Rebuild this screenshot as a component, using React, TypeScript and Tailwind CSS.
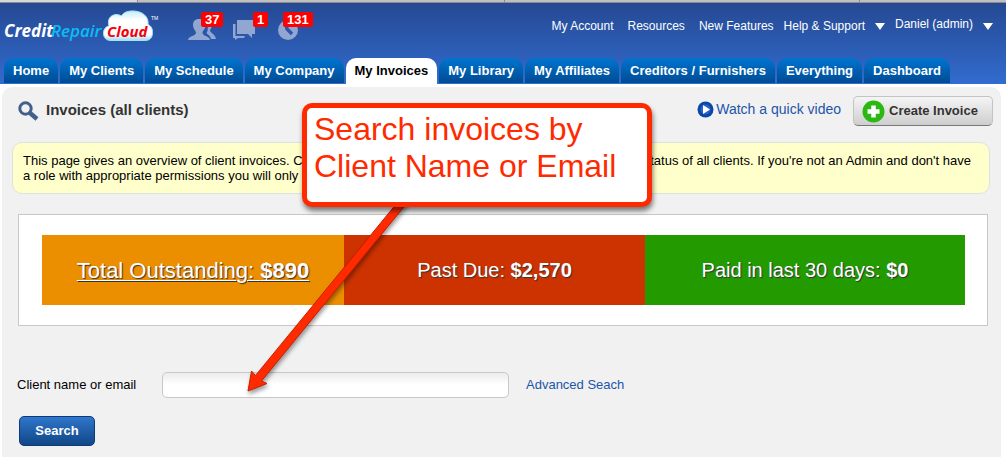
import { useState } from 'react';

const tabs = [
  'Home',
  'My Clients',
  'My Schedule',
  'My Company',
  'My Invoices',
  'My Library',
  'My Affiliates',
  'Creditors / Furnishers',
  'Everything',
  'Dashboard',
];

const totals = [
  { label: 'Total Outstanding:', amount: '$890', style: 'bg-[#eb8f00] text-[22px] underline underline-offset-2 decoration-1' },
  { label: 'Past Due:', amount: '$2,570', style: 'bg-[#cc3300] text-xl' },
  { label: 'Paid in last 30 days:', amount: '$0', style: 'bg-[#239a00] text-xl' },
];

function Logo() {
  return (
    <svg width="160" height="44" viewBox="0 0 160 44" role="img" aria-label="CreditRepairCloud">
      <defs>
        <linearGradient id="cloud" x1="0" y1="0" x2="0" y2="1">
          <stop offset="0" stopColor="#c4ecf9" />
          <stop offset="0.3" stopColor="#ffffff" />
          <stop offset="0.8" stopColor="#ffffff" />
          <stop offset="1" stopColor="#9edcf2" />
        </linearGradient>
      </defs>
      <path
        d="M111 37.500C106 37.500 103.500 34.500 103.500 30C103.500 26 106 23.500 109 23C107 17 110 12 116 11.500C118 11.500 120 12 121.500 13C123.500 9 128.500 7.800 134 8C143 8.500 149 14 148 21.500C151.500 23 152.500 26 152.500 29.500C152.500 34.500 150 37.500 145 37.500Z"
        fill="url(#cloud)"
        stroke="#a9e2f5"
        strokeWidth="1"
      />
      <g fontFamily="'Open Sans', 'Noto Sans', sans-serif" fontStyle="italic">
        <text x="4" y="34" fontSize="17" fontWeight="700" fill="#fff">Credit</text>
        <text x="51" y="34" fontSize="17" fontWeight="600" fill="#0bbcf5">Repair</text>
        <text x="107" y="34" fontSize="15" fontWeight="700" fill="#f4000c">Cloud</text>
      </g>
      <text x="151" y="17" fontSize="5" fill="#fff" fontFamily="Liberation Sans, sans-serif">TM</text>
    </svg>
  );
}

function Alerts() {
  const badge = 'absolute top-0 rounded-xs bg-[#fe0000] px-1 text-[13px] leading-[15px] font-bold text-white';

  return (
    <div className="flex pt-[9px]">
      <a href="#leads" className="relative block w-11">
        <svg width="28" height="28" viewBox="0 0 28 28" fill="#91a7d1" aria-hidden="true">
          <path d="M17 8.500C21 7 24 9 24 13C24 15.500 22.500 17 22 18.500C22 21 27 21.500 28 27H23C22.500 24 20 22.500 18.500 21.500C20.500 18 20.500 12 17 8.500Z" />
          <path d="M0 28C0.500 23.500 8 24.500 8 20.500C8 19 5 17 5 13C5 9 7.500 7 11 7C15 7 17.500 9 17.500 13C17.500 17 14.500 19 14.500 20.500C14.500 24.500 21 23.500 22 28Z" />
        </svg>
        <span className={`${badge} left-[13px]`}>37</span>
      </a>
      <a href="#messages" className="relative block w-11">
        <svg width="24" height="28" viewBox="0 0 24 28" fill="#91a7d1" aria-hidden="true">
          <path d="M5 8H23V22H20V26L16 22H5Z" />
          <path d="M1 12H3.500V24H13L12 26H6L3 28V26H1Z" />
        </svg>
        <span className={`${badge} left-[21px]`}>1</span>
      </a>
      <a href="#tasks" className="relative block w-11">
        <svg width="23" height="28" viewBox="0 0 23 28" aria-hidden="true">
          <circle cx="12" cy="18" r="10" fill="#91a7d1" />
          <path d="M10 12L11 17L16 22" fill="none" stroke="#2c57a9" strokeWidth="3.500" />
        </svg>
        <span className={`${badge} left-[7px]`}>131</span>
      </a>
    </div>
  );
}

function Caret() {
  return (
    <svg width="10" height="7" viewBox="0 0 10 7" fill="#fff" aria-hidden="true">
      <path d="M0 0H10L5 7Z" />
    </svg>
  );
}

function Header() {
  return (
    <header className="bg-gradient-to-b from-[#254993] to-[#326ccf]">
      <div className="flex h-[55px] items-start justify-between pr-[13px] text-xs text-white">
        <div className="flex">
          <a href="#home">
            <Logo />
          </a>
          <div className="ml-7">
            <Alerts />
          </div>
        </div>
        <div className="flex items-start gap-[14px] pt-[15px]">
          <a href="#account">My Account</a>
          <a href="#resources">Resources</a>
          <a href="#features">New Features</a>
          <a href="#help" className="-ml-1 flex items-center gap-[10px]">
            Help &amp; Support <Caret />
          </a>
          <a href="#profile" className="-mt-[2px] -ml-1 flex items-center gap-[10px]">
            Daniel (admin)
            <span className="pt-1">
              <Caret />
            </span>
          </a>
        </div>
      </div>
      <nav className="flex gap-[2px] px-1 text-[13px] font-bold">
        {tabs.map((tab) =>
          tab === 'My Invoices' ? (
            <a key={tab} href="#invoices" className="h-[26px] rounded-t-[10px] bg-white px-[9px] leading-[25px] whitespace-nowrap text-black">
              {tab}
            </a>
          ) : (
            <a
              key={tab}
              href="#tab"
              className="mb-px h-[25px] rounded-t-[10px] bg-gradient-to-b from-[#0075d1] to-[#004b93] px-[9px] leading-[25px] whitespace-nowrap text-white"
            >
              {tab}
            </a>
          )
        )}
      </nav>
    </header>
  );
}

function Callout() {
  return (
    <>
      <svg className="absolute top-[110px] left-[238px] drop-shadow-[1px_3px_2px_rgba(0,0,0,0.4)]" width="180" height="200" viewBox="240 197 180 200" aria-hidden="true">
        <path
          d="M402 197L255.500 375.500L251.500 371L248 391L267 383.500L261.500 381L412 197Z"
          fill="#ff2a00"
          stroke="#c61f00"
          strokeWidth="1"
          strokeLinejoin="round"
        />
      </svg>
      <div className="absolute top-4 left-[300px] h-[104px] w-[350px] rounded-[10px] border-[5px] border-[#ff2a00] bg-white px-[7px] pt-[3px] text-[32px] leading-[37px] text-[#ff2a00] shadow-[1px_4px_5px_rgba(0,0,0,0.5)]">
        Search invoices by Client Name or Email
      </div>
    </>
  );
}

export default function InvoicesPage() {
  const [query, setQuery] = useState('');

  return (
    <div className="flex min-h-screen flex-col bg-white text-[13px] text-black" style={{ fontFamily: '"Liberation Sans", Arial, sans-serif' }}>
      {/* Browser chrome edge */}
      <div className="flex h-[3px] border-b border-[#8b8b8b] bg-[#c0c0c0]">
        <div className="w-[138px] border-r border-[#8b8b8b] bg-[#d8d8d8]" />
        <div className="w-[367px] border-r border-[#8b8b8b]" />
        <div className="w-[355px] border-r border-[#8b8b8b]" />
      </div>

      <Header />

      <main className="relative mt-[3px] mr-[5px] ml-[2px] flex-1 rounded-t-[10px] bg-[#f1f1f1]">
        {/* Title row */}
        <div className="flex items-start justify-between pt-[9px] pr-2 pl-4">
          <h1 className="flex items-center gap-[7px] pt-px text-[15px] leading-[22px] font-bold text-[#333]">
            <svg className="mt-1" width="21" height="21" viewBox="0 0 21 21" fill="none" stroke="#42608c" aria-hidden="true">
              <circle cx="7.500" cy="7.500" r="5.700" strokeWidth="3" />
              <path d="M12 12L19 18" strokeWidth="4.500" />
            </svg>
            Invoices (all clients)
          </h1>
          <div className="flex items-start gap-3">
            <a href="#video" className="flex items-center gap-[2px] pt-[3px] text-sm text-[#1d55aa]">
              <svg width="17" height="17" viewBox="0 0 17 17" aria-hidden="true">
                <circle cx="8.500" cy="8.500" r="8" fill="#0a47ad" />
                <circle cx="8.500" cy="8.500" r="5" fill="#2b63c0" />
                <path d="M6 4L13 8.500L6 13Z" fill="#fff" />
              </svg>
              Watch a quick video
            </a>
            <button
              type="button"
              className="flex h-[30px] w-[140px] items-center gap-1 rounded-[5px] border border-[#c4c4c4] border-b-[#777] bg-gradient-to-b from-[#f5f5f5] to-[#cecece] pl-2 text-[13px] font-bold text-[#333]"
            >
              <svg width="23" height="23" viewBox="0 0 23 23" aria-hidden="true">
                <circle cx="11.500" cy="11.500" r="11" fill="#2cb812" />
                <path d="M11.500 5.500V17.500M5.500 11.500H17.500" stroke="#fff" strokeWidth="4.500" />
              </svg>
              Create Invoice
            </button>
          </div>
        </div>

        {/* Notice */}
        <div className="mt-4 mr-[11px] ml-[10px] rounded-[10px] border border-[#e0e0e0] bg-[#ffffcc] px-[10px] py-[10px] leading-[15px]">
          <p className="flex justify-between pr-2 whitespace-nowrap">
            <span>This page gives an overview of client invoices. C</span>
            <span>status of all clients. If you're not an Admin and don't have</span>
          </p>
          <p>a role with appropriate permissions you will only s</p>
        </div>

        {/* Totals */}
        <section className="mt-5 mr-[13px] ml-4 border border-[#c8c8c8] bg-white py-5 pr-[22px] pl-[23px]">
          <div className="grid grid-cols-[302fr_301fr_320fr]">
            {totals.map((total) => (
              <a
                key={total.label}
                href="#total"
                className={`flex h-[70px] items-center justify-center text-white [text-shadow:1px_1px_1px_#333] ${total.style}`}
              >
                <span>
                  {total.label} <b>{total.amount}</b>
                </span>
              </a>
            ))}
          </div>
        </section>

        {/* Search form */}
        <form className="mt-[46px] pl-[15px]" onSubmit={(e) => e.preventDefault()}>
          <div className="flex items-center">
            <label htmlFor="client" className="w-[145px]">
              Client name or email
            </label>
            <input
              id="client"
              type="text"
              value={query}
              onChange={(e) => setQuery(e.target.value)}
              className="h-[26px] w-[347px] rounded-[5px] border border-[#c8c8c8] bg-gradient-to-b from-[#ececec] via-white to-white px-2"
            />
            <a href="#advanced" className="ml-[17px] text-[#1d55aa]">
              Advanced Seach
            </a>
          </div>
          <button
            type="submit"
            className="mt-[18px] ml-[2px] h-[30px] w-[76px] rounded-[5px] border border-[#0d3a78] bg-gradient-to-b from-[#2f76cc] to-[#114786] font-bold text-white"
          >
            Search
          </button>
        </form>

        <Callout />
      </main>
    </div>
  );
}
